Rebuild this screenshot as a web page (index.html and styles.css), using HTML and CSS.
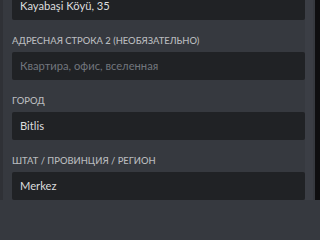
FILE: index.html
```html
<!DOCTYPE html>
<html lang="ru">
<head>
<meta charset="utf-8">
<link rel="stylesheet" href="styles.css">
</head>
<body>
<div class="frame">
  <div class="edge"></div>
  <form class="form">
    <div class="field first">
      <div class="input">Kayabaşi Köyü, 35</div>
    </div>
    <div class="field">
      <div class="label">Адресная строка 2 (необязательно)</div>
      <div class="input placeholder">Квартира, офис, вселенная</div>
    </div>
    <div class="field">
      <div class="label">Город</div>
      <div class="input">Bitlis</div>
    </div>
    <div class="field">
      <div class="label">Штат / Провинция / Регион</div>
      <div class="input">Merkez</div>
    </div>
  </form>
  <div class="track"></div>
  <div class="gap"></div>
  <div class="outside"></div>
</div>
</body>
</html>
```

FILE: styles.css
```css
html, body {
  margin: 0;
  padding: 0;
  width: 320px;
  height: 200px;
  overflow: hidden;
  background: #36393f;
}
.frame {
  display: flex;
  height: 200px;
  overflow: hidden;
  font-family: Lato, "Noto Sans", sans-serif;
}
.edge {
  width: 3px;
  background: #2f3136;
  flex: none;
}
.form {
  flex: none;
  width: 293px;
  padding-left: 9px;
  margin-top: -8px;
}
.field {
  display: flex;
  flex-direction: column;
}
.label {
  margin-top: 14px;
  margin-bottom: 4px;
  height: 14px;
  line-height: 14px;
  font-size: 9.4px;
  font-weight: 500;
  text-transform: uppercase;
  color: #b9bbbe;
  white-space: nowrap;
}
.input {
  height: 28px;
  line-height: 28px;
  padding-left: 8px;
  background: #202225;
  color: #dcddde;
  font-size: 11.2px;
  border-radius: 2px;
  white-space: nowrap;
}
.placeholder {
  color: #72767d;
}
.track {
  width: 8px;
  flex: none;
  background: #3b3e45;
}
.gap {
  width: 2px;
  flex: none;
  background: #36393f;
}
.outside {
  flex: 1;
  background: #0e0e10;
}
```
